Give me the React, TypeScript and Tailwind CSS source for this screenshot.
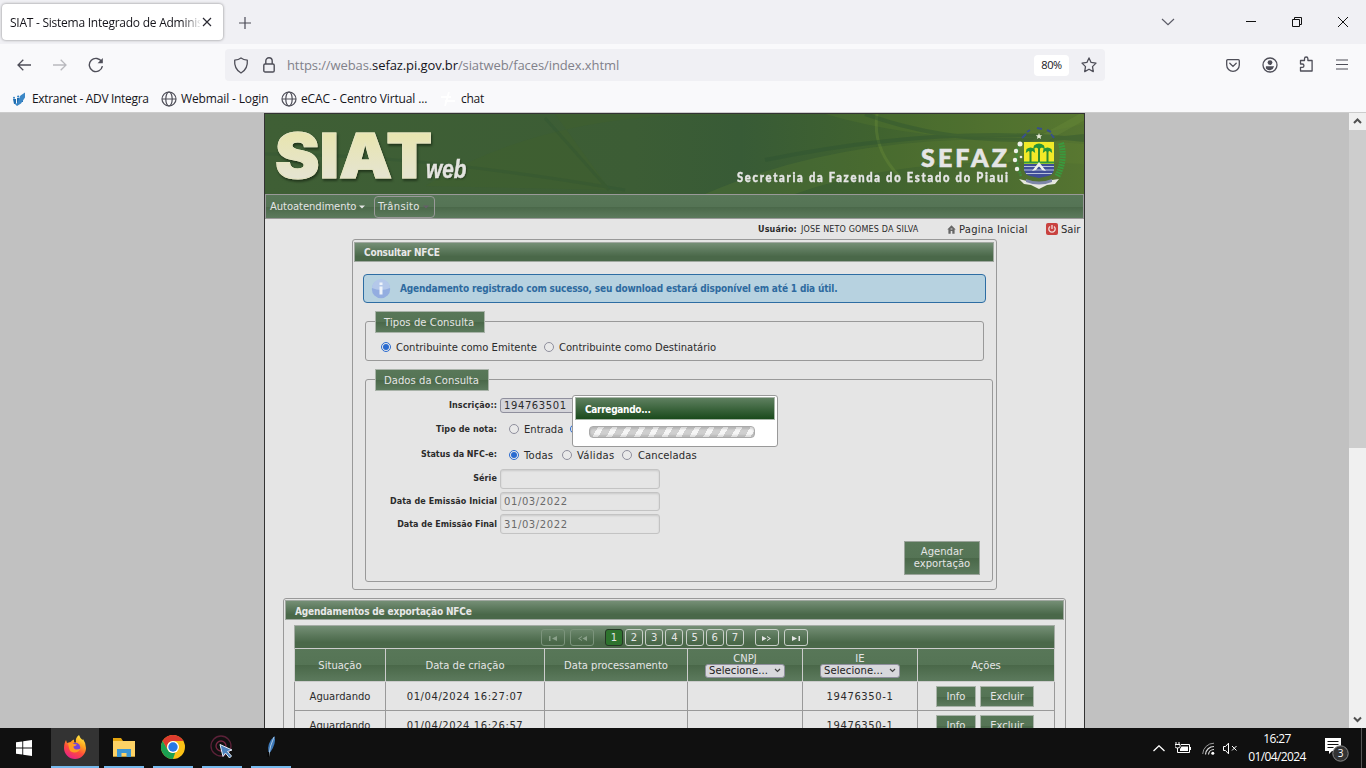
import React from "react";

const glass = "bg-[linear-gradient(to_bottom,#587758_0%,#557455_50%,#4a6849_51%,#5c7a5d_100%)]";
const barBg = "bg-[linear-gradient(to_bottom,#758f76_0%,#5a775a_45%,#4a6849_75%,#4a6849_100%)]";
const chromeFont = "font-['Open_Sans','Noto_Sans',sans-serif]";

function Globe() {
  return (
    <svg width="16" height="16" viewBox="0 0 16 16" fill="none" stroke="#4e4e58" strokeWidth="1.2">
      <circle cx="8" cy="8" r="7" />
      <ellipse cx="8" cy="8" rx="3.2" ry="7" />
      <path d="M1 8h14" strokeWidth="1" />
    </svg>
  );
}

function TabBar() {
  return (
    <div className="flex h-11 shrink-0 items-start bg-[#f0f0f4]">
      <div className="ml-[2px] mt-1 flex h-9 w-[221px] items-center rounded bg-white pl-2 shadow-[0_0_3px_rgba(0,0,0,0.45)]">
        <div className="w-[190px] overflow-hidden whitespace-nowrap pt-[2px] text-[12px] tracking-[-0.25px] text-[#15141a] [mask-image:linear-gradient(to_right,black_172px,transparent_192px)]">
          SIAT - Sistema Integrado de Adminis
        </div>
        <svg width="10" height="10" viewBox="0 0 10 10" stroke="#2b2a33" strokeWidth="1.2" className="ml-[2px]">
          <path d="M1 1l8 8M9 1l-8 8" />
        </svg>
      </div>
      <svg width="12" height="12" viewBox="0 0 12 12" stroke="#4a4a55" strokeWidth="1.2" className="ml-4 mt-[17px]">
        <path d="M6 0v12M0 6h12" />
      </svg>
      <div className="flex-1" />
      <svg width="14" height="8" viewBox="0 0 14 8" fill="none" stroke="#5b5b66" strokeWidth="1.2" className="mr-[71px] mt-[18px]">
        <path d="M1 1l6 5.6L13 1" />
      </svg>
      <svg width="10" height="12" viewBox="0 0 10 12" className="mr-9 mt-4">
        <path d="M0 5.5h10" stroke="#111" />
      </svg>
      <svg width="10" height="10" viewBox="0 0 10 10" fill="none" stroke="#111" className="mr-9 mt-[17px]">
        <path d="M.5 2.5h7v7h-7zM2.5 2.5v-2h7v7h-2" />
      </svg>
      <svg width="10" height="10" viewBox="0 0 10 10" stroke="#111" className="mr-[18px] mt-[17px]">
        <path d="M0 0l10 10M10 0L0 10" />
      </svg>
    </div>
  );
}

function NavBar() {
  return (
    <div className="flex h-[42px] shrink-0 items-center bg-[#f9f9fb]">
      <svg width="14" height="12" viewBox="0 0 14 12" fill="none" stroke="#4e4e58" strokeWidth="1.3" className="ml-[17px]">
        <path d="M14 6H1M6.3.7L1 6l5.3 5.3" />
      </svg>
      <svg width="14" height="12" viewBox="0 0 14 12" fill="none" stroke="#b9b9be" strokeWidth="1.3" className="ml-[22px]">
        <path d="M0 6h13M7.7.7L13 6l-5.3 5.3" />
      </svg>
      <svg width="16" height="16" viewBox="0 0 16 16" fill="none" stroke="#4e4e58" strokeWidth="1.4" className="ml-[21px]">
        <path d="M13.8 5A6.6 6.6 0 1 0 14.4 9.2" />
        <path d="M14.8 1v5.2H9.6z" fill="#4e4e58" stroke="none" />
      </svg>
      <div className="ml-[121px] flex h-8 w-[880px] items-center rounded bg-[#f0f0f4]">
        <svg width="16" height="17" viewBox="0 0 16 17" fill="none" stroke="#4e4e58" strokeWidth="1.3" className="ml-2">
          <path d="M8 1c2 1.5 4.2 2 6.3 2.200c.5 5.500-1.500 10-6.300 12.800C3.200 13.200 1.200 8.700 1.700 3.200 3.800 3 6 2.500 8 1z" strokeLinejoin="round" />
        </svg>
        <svg width="12" height="16" viewBox="0 0 12 16" fill="none" stroke="#4e4e58" strokeWidth="1.4" className="ml-[14px]">
          <rect x=".8" y="7" width="10.400" height="8" rx="1.300" />
          <path d="M2.800 7V4a3.200 3.200 0 0 1 6.400 0v3" />
        </svg>
        <div className="ml-3 w-[340px] whitespace-nowrap pt-px text-[13px] tracking-[-0.1px] text-[#81818a]">
          https://webas.<span className="text-[#15141a]">sefaz.pi.gov.br</span>/siatweb/faces/index.xhtml
        </div>
        <div className="flex-1" />
        <div className="flex h-[21px] w-[35px] items-center justify-center rounded bg-white text-[11px] tracking-[-0.4px] text-[#15141a]">80%</div>
        <svg width="16" height="16" viewBox="0 0 16 16" fill="none" stroke="#4e4e58" strokeWidth="1.3" strokeLinejoin="round" className="ml-3 mr-2">
          <path d="M8 .9l2.100 4.500 4.900.700-3.500 3.500.8 5L8 12.200l-4.300 2.400.8-5L1 6.100l4.900-.7z" />
        </svg>
      </div>
      <div className="flex-1" />
      <svg width="14" height="13" viewBox="0 0 14 13" fill="none" stroke="#4e4e58" strokeWidth="1.300" className="mr-[22px]">
        <path d="M1.700.7h10.600a1 1 0 0 1 1 1V6a6.300 6.300 0 0 1-12.600 0V1.700a1 1 0 0 1 1-1zM3.800 4.300L7 7.400l3.200-3.100" strokeLinecap="round" />
      </svg>
      <svg width="16" height="16" viewBox="0 0 16 16" className="mr-[21px]">
        <circle cx="8" cy="8" r="7" fill="none" stroke="#4e4e58" strokeWidth="1.300" />
        <circle cx="8" cy="5.600" r="2.400" fill="#4e4e58" />
        <path d="M3.900 9.300h8.200a4.800 4.800 0 0 1-8.200 2.300z" fill="#4e4e58" />
      </svg>
      <svg width="15" height="16" viewBox="0 0 15 16" fill="none" stroke="#4e4e58" strokeWidth="1.300" strokeLinejoin="round" className="mb-[2px] mr-[22px]">
        <path d="M1.500 4.500h4V2.700a1.700 1.700 0 0 1 3.400 0v1.800h4.200V15H1.500v-3.700h1.800a1.600 1.600 0 0 0 0-3.300H1.500z" />
      </svg>
      <svg width="12" height="11" viewBox="0 0 12 11" stroke="#4e4e58" strokeWidth="1.200" className="mb-[2px] mr-[18px]">
        <path d="M0 1h12M0 5.500h12M0 10h12" />
      </svg>
    </div>
  );
}

function Bookmarks() {
  return (
    <div className="flex h-[26px] shrink-0 items-center bg-[#f9f9fb] text-[12px] text-[#15141a]">
      <svg width="15" height="15" viewBox="0 0 15 15" className="ml-3">
        <path d="M1 7h3v5H2zM5 6h2.500v6H5zM8.500 4H11v6H8.500z" fill="#1f6db0" />
        <path d="M8.500 3.500l4.500-3v5L9 11.500 5 14l-3-3 3 .5z" fill="#3c87c6" />
        <circle cx="6.200" cy="4.500" r="1.100" fill="#2f7fc2" /><circle cx="2" cy="5.800" r="1" fill="#2f7fc2" />
      </svg>
      <span className="ml-[5px] w-[118px] whitespace-nowrap tracking-[-0.32px]">Extranet - ADV Integra</span>
      <div className="ml-[11px]"><Globe /></div>
      <span className="ml-1 w-[88px] whitespace-nowrap tracking-[-0.14px]">Webmail - Login</span>
      <div className="ml-3"><Globe /></div>
      <span className="ml-1 w-[127px] whitespace-nowrap tracking-[-0.14px]">eCAC - Centro Virtual ...</span>
      <svg width="16" height="16" viewBox="0 0 16 16" fill="none" stroke="#ffffff" strokeWidth="1.800" className="ml-3">
        <path d="M1 6h10M5 10h10M9 1L5 15" />
      </svg>
      <span className="ml-[5px] whitespace-nowrap tracking-[-0.3px]">chat</span>
    </div>
  );
}

function Crest() {
  return (
    <svg width="54" height="64" viewBox="0 0 54 64">
      <path d="M10 12l4-4M15 6l3-2M25 2l5 1M35 4l4 2M39 8l3 4" stroke="#39508a" strokeWidth="2" />
      <path d="M27 7l.9 2.200h2.300l-1.700 1.500.6 2.300-2.100-1.300-2.100 1.300.6-2.300-1.700-1.500h2.300z" fill="#e8ecd8" />
      <rect x="12" y="16" width="30" height="22" fill="#f2e928" />
      <path d="M12 38v4c0 4 2 7 6 8l9 2 9-2c4-1 6-4 6-8v-4z" fill="#3f4d97" />
      <path d="M12 40.500h30M12 44h30M14 47.500h26" stroke="#b9c2da" strokeWidth="1" />
      <path d="M12 35.500h30v2H12z" fill="#2f9a3c" />
      <path d="M27 21v15M18.500 25v11M35.500 25v11" stroke="#2f8a2e" strokeWidth="2" />
      <g fill="#24923a">
        <path d="M22 19.500q5-4 10 0l1 4-3-2-3 1.500-3-1.500-3 2z" />
        <path d="M14.500 23q4-3 8 0l.7 4-2.700-2-2 1-2-1-2.700 2z" />
        <path d="M31.500 23q4-3 8 0l.7 4-2.700-2-2 1-2-1-2.700 2z" />
      </g>
      <path d="M27 36l7 9-4-1-3-4-3 4-4 1z" fill="#eef0ea" />
      <path d="M7 19q-5 13 2 31" stroke="#3f8c3c" strokeWidth="2.500" strokeDasharray="2 1" fill="none" />
      <path d="M49 17q5 16-4 34" stroke="#3a9a3e" strokeWidth="6" strokeDasharray="1.800 .9" fill="none" />
      <g fill="#eef0ea">
        <circle cx="8" cy="18" r="2.500" /><circle cx="4" cy="25" r="2.200" /><circle cx="3" cy="34" r="2.200" />
        <circle cx="5" cy="43" r="2.200" /><circle cx="9" cy="31" r="1.300" />
      </g>
      <path d="M7 53l8 2q12 5 25-1l7-1-4 5-8 1-8 4-8-4-7-1z" fill="#e6e8df" />
      <path d="M14 53q13 5 26 0v3q-13 5-26 0z" fill="#7d86a8" />
    </svg>
  );
}

function Banner() {
  return (
    <div className="relative h-20 shrink-0 overflow-hidden bg-[linear-gradient(to_right,#3f5f35_0%,#3c5d35_45%,#385b36_58%,#40632f_75%,#557431_100%)]">
      <svg width="819" height="80" viewBox="0 0 819 80" className="absolute left-0 top-0">
        <path d="M160 72Q260 10 400 2L620 0 290 0 345 76z" fill="#456529" opacity=".25" />
        <path d="M440 80Q600 10 819 30V50Q640 40 530 80z" fill="#6b8a34" opacity=".22" />
        <path d="M560 0Q700 40 819 10V0z" fill="#64852f" opacity=".2" />
        <path d="M612 0q-5 34 22 62" stroke="#6e8e3a" strokeWidth="3" opacity=".35" fill="none" />
        <path d="M740 46L819 2" stroke="#6e8e3a" strokeWidth="8" opacity=".3" fill="none" />
        <path d="M600 0Q700 36 819 22M500 46Q680 10 819 26" stroke="#2d5231" strokeWidth="4" opacity=".4" fill="none" />
        <path d="M280 4l64 72M0 40q150 0 360 36" stroke="#2d5231" strokeWidth="3" opacity=".3" fill="none" />
      </svg>
      <div className="absolute left-[10px] top-[9px] origin-left scale-x-[1.08] whitespace-nowrap font-[Inter,sans-serif] text-[62px] font-black leading-[66px] tracking-[0px] [filter:drop-shadow(1px_2px_1px_rgba(20,35,15,0.7))]">
        <span className="bg-[linear-gradient(to_bottom,#e8e5ae_18%,#e5e4d4_85%)] bg-clip-text text-transparent [-webkit-text-stroke:1px_#e6e5c2]">SIAT</span>
      </div>
      <div className="absolute left-[161px] top-[39px] origin-left scale-x-[0.8] font-['Liberation_Sans',sans-serif] text-[26px] font-bold italic leading-[32px] text-[#e4e4e0] [-webkit-text-stroke:0.5px_#e4e4e0] [text-shadow:1px_1px_2px_#1e3018]">
        web
      </div>
      <div className="absolute left-[656px] top-[28px] font-[Lato,sans-serif] text-[25px] font-black leading-[30px] tracking-[3.1px] text-[#e5e5e5] [-webkit-text-stroke:0.6px_#e5e5e5]">SEFAZ</div>
      <div className="absolute left-[472px] top-[53px] origin-left scale-x-[0.8] whitespace-nowrap font-[Lato,sans-serif] text-[14px] font-black leading-[20px] tracking-[2.14px] text-[#e5e5e5] [-webkit-text-stroke:0.4px_#e5e5e5]">
        Secretaria da Fazenda do Estado do Piaui
      </div>
      <div className="absolute left-[747px] top-[12px]"><Crest /></div>
    </div>
  );
}

function MenuBar() {
  return (
    <div className={`flex h-[25px] shrink-0 items-center border border-[#999] text-[#e5e5e5] ${glass}`}>
      <span className="ml-1 w-[88px] whitespace-nowrap tracking-[-0.05px]">Autoatendimento</span>
      <svg width="6" height="4" viewBox="0 0 6 4" className="ml-px mr-px"><path d="M0 .5h6L3 3.500z" fill="#e5e5e5" /></svg>
      <div className="ml-2 flex h-[22px] w-[61px] items-center rounded-sm border border-[#999] pl-[3px]">
        <span className="w-[45px] tracking-[0.3px]">Trânsito</span>
        <svg width="6" height="4" viewBox="0 0 6 4"><path d="M0 .5h6L3 3.500z" fill="#665f69" /></svg>
      </div>
    </div>
  );
}

function UserRow() {
  return (
    <div className="flex h-5 shrink-0 items-center whitespace-nowrap">
      <span className="ml-[493px] w-[43px] text-[8px] font-bold tracking-[0.15px]">Usuário:</span>
      <span className="w-[146px] text-[8px] tracking-[0.16px]">JOSE NETO GOMES DA SILVA</span>
      <svg width="9" height="9" viewBox="0 0 9 9" className="mr-[3px]"><path d="M4.500.3L8.700 4.500H7.600V8.700H5.300V6H3.700V8.700H1.400V4.500H.3z" fill="#666" /><path d="M3.600 4h1.800" stroke="#ddd" /></svg>
      <span className="w-[87px] tracking-[0.22px]">Pagina Inicial</span>
      <svg width="12" height="12" viewBox="0 0 12 12">
        <rect width="12" height="12" rx="2" fill="#c9423f" />
        <path d="M4 3.500a3.200 3.200 0 1 0 4 0M6 2v4" stroke="#f1dddd" strokeWidth="1.300" fill="none" />
      </svg>
      <span className="ml-[3px]">Sair</span>
    </div>
  );
}

function Radio({ on = false }: { on?: boolean }) {
  return (
    <span className={`flex h-[10px] w-[10px] shrink-0 items-center justify-center rounded-full border bg-[#e9e9e9] ${on ? "border-[#2a6bd0]" : "border-[#8f8f9d]"}`}>
      {on && <span className="h-[6px] w-[6px] rounded-full bg-[#2a6bd0]" />}
    </span>
  );
}

function Legend({ text, className }: { text: string; className: string }) {
  return (
    <div className={`absolute -top-[11px] left-[9px] flex h-[22px] items-center border border-[#a9b3a9] pl-2 text-[#e5e5e5] ${glass} ${className}`}>{text}</div>
  );
}

function Field({ label, row, tight = false, children }: { label: string; row: string; tight?: boolean; children?: React.ReactNode }) {
  return (
    <div className={`flex items-center ${row}`}>
      <span className={`mr-[3px] w-[131px] whitespace-nowrap text-right text-[8px] font-bold ${tight ? "tracking-[0px]" : "tracking-[0.1px]"}`}>{label}</span>
      {children}
    </div>
  );
}

const inputCls = "flex w-40 items-center rounded-[3px] border border-[#c3c3c3] pl-[3px] text-[#6a6a6a] tracking-[0.6px] shadow-[inset_0_1px_2px_rgba(0,0,0,0.12)] ";

function Consultar() {
  return (
    <div className="relative ml-[87px] h-[351px] w-[645px] shrink-0 rounded-[3px] border border-[#999] px-px pt-[2px]">
      <div className={`flex h-5 w-[640px] items-center border border-[#a0a8a0] pl-[9px] font-['DejaVu_Sans_Condensed','DejaVu_Sans',sans-serif] font-bold tracking-[-0.2px] text-[#e8e8e8] ${barBg}`}>
        Consultar NFCE
      </div>
      <div className="ml-[9px] mt-3 flex h-[29px] w-[623px] items-center rounded-sm border border-[#2e6da3] bg-[#b7d2e0] font-bold text-[#2e6a9f]">
        <svg width="20" height="20" viewBox="0 0 20 20" className="ml-[7px] mr-[9px]">
          <circle cx="10" cy="10" r="9.200" fill="#93ade0" />
          <path d="M1 9a9 9 0 0 1 18 0Q10 13 1 9z" fill="#b4c8ea" />
          <rect x="8.500" y="7.500" width="3" height="8" fill="#eef3fa" />
          <rect x="8.500" y="3.500" width="3" height="2.500" fill="#eef3fa" />
        </svg>
        <span className="whitespace-nowrap font-['DejaVu_Sans_Condensed','DejaVu_Sans',sans-serif] tracking-[-0.16px]">Agendamento registrado com sucesso, seu download estará disponível em até 1 dia útil.</span>
      </div>
      <div className="relative ml-[11px] mt-[18px] flex h-10 w-[619px] items-center rounded-[3px] border border-[#999] pl-[15px] pt-3">
        <Legend text="Tipos de Consulta" className="w-[110px] tracking-[0.08px]" />
        <Radio on />
        <span className="ml-[5px] w-[148px] tracking-[-0.02px]">Contribuinte como Emitente</span>
        <Radio />
        <span className="ml-[5px]">Contribuinte como Destinatário</span>
      </div>
      <div className="relative ml-[11px] mt-[18px] flex h-[203px] w-[628px] flex-col rounded-[3px] border border-[#999] pt-[14px]">
        <Legend text="Dados da Consulta" className="w-[114px] tracking-[0.05px]" />
        <Field label="Inscrição::" row="h-[22px]">
          <div className="flex h-[15px] w-40 items-center rounded-[3px] border border-[#8f8f9d] bg-[#d5d5da] pl-[3px] tracking-[0.6px]">194763501</div>
        </Field>
        <Field label="Tipo de nota:" row="h-[26px]">
          <span className="ml-[9px] flex items-center"><Radio /><span className="ml-[5px] w-[46px]">Entrada</span><Radio on /></span>
        </Field>
        <Field label="Status da NFC-e:" tight row="h-[25px]">
          <span className="ml-[9px] flex items-center pt-px">
            <Radio on /><span className="ml-[5px] w-[38px] tracking-[0.2px]">Todas</span>
            <Radio /><span className="ml-[5px] w-[45px] tracking-[0.3px]">Válidas</span>
            <Radio /><span className="ml-[6px] tracking-[0.1px]">Canceladas</span>
          </span>
        </Field>
        <Field label="Série" row="h-[23px]"><div className={inputCls + "h-5"} /></Field>
        <Field label="Data de Emissão Inicial" row="h-[23px]"><div className={inputCls + "h-[19px]"}>01/03/2022</div></Field>
        <Field label="Data de Emissão Final" tight row="h-[22px]"><div className={inputCls + "h-5"}>31/03/2022</div></Field>
        <button className={`ml-[538px] mt-[6px] h-[34px] w-[76px] border border-[#9aa39a] text-center leading-[12px] text-[#e5e5e5] ${glass}`}>Agendar<br />exportação</button>
      </div>
      <div className="absolute left-[219px] top-[155px] h-[52px] w-[206px] rounded-[3px] border border-[#999] bg-white px-[2px] pt-px">
        <div className="flex h-[23px] items-center border border-[#a8b5a8] bg-[linear-gradient(to_bottom,#5f8060,#1a4a1c)] pl-[9px] pt-[2px] font-['DejaVu_Sans_Condensed','DejaVu_Sans',sans-serif] font-bold tracking-[-0.3px] text-white">Carregando...</div>
        <div className="ml-[14px] mt-[6px] h-3 w-[166px] rounded-sm border border-[#aaa] bg-[repeating-linear-gradient(120deg,#cfcfcf_0px,#cfcfcf_7px,#f6f6f6_7px,#f6f6f6_12px)] shadow-[inset_0_-2px_2px_rgba(0,0,0,0.1),inset_0_2px_2px_rgba(0,0,0,0.12)]" />
      </div>
    </div>
  );
}

function PageBtn({ children, className }: { children: React.ReactNode; className: string }) {
  return <span className={`flex h-[17px] items-center justify-center rounded-[3px] border ${className}`}>{children}</span>;
}

const cell = "flex items-center justify-center border-r";

function Select() {
  return (
    <div className="flex h-[14px] w-20 items-center rounded-[3px] border border-[#8f8f9d] bg-[#d8d8dc] pl-[3px] leading-none text-[#222]">
      <span className="w-[65px] text-left tracking-[0.1px]">Selecione...</span>
      <svg width="7" height="5" viewBox="0 0 7 5" fill="none" stroke="#444" strokeWidth="1.200"><path d="M1 1l2.500 2.500L6 1" /></svg>
    </div>
  );
}

function Row({ date }: { date: string }) {
  return (
    <div className="flex h-[29px] shrink-0 border-b border-l border-[#999]">
      <div className={`w-[91px] border-[#999] ${cell}`}>Aguardando</div>
      <div className={`w-[159px] border-[#999] tracking-[0.57px] ${cell}`}>{date}</div>
      <div className={`w-[143px] border-[#999] ${cell}`} />
      <div className={`w-[115px] border-[#999] ${cell}`} />
      <div className={`w-[115px] border-[#999] tracking-[0.6px] ${cell}`}>19476350-1</div>
      <div className={`w-[137px] gap-1 border-[#999] pr-[2px] text-[#e5e5e5] ${cell}`}>
        <button className={`h-[21px] w-10 border border-[#a9b3a9] ${glass}`}>Info</button>
        <button className={`h-[21px] w-[54px] border border-[#a9b3a9] ${glass}`}>Excluir</button>
      </div>
    </div>
  );
}

function Agendamentos() {
  return (
    <div className="ml-[18px] mt-2 h-[200px] w-[783px] shrink-0 rounded-[3px] border border-[#999] px-px pt-px">
      <div className={`flex h-5 w-[779px] items-center border border-[#a0a8a0] pl-[9px] pt-[3px] font-['DejaVu_Sans_Condensed','DejaVu_Sans',sans-serif] font-bold tracking-[-0.15px] text-[#e8e8e8] ${barBg}`}>
        Agendamentos de exportação NFCe
      </div>
      <div className="ml-[9px] mt-[5px] w-[761px]">
        <div className={`flex h-[24px] items-center border border-[#a5aca5] border-b-[#ccc] pl-[246px] text-[#e5e5e5] ${barBg}`}>
          <PageBtn className="mr-[5px] w-6 border-[#7c947c]"><svg width="8" height="5" viewBox="0 0 8 5" fill="#8aa08a" className="mt-[3px]"><path d="M0 0h1.500v5H0zM8 0v5L3 2.500z" /></svg></PageBtn>
          <PageBtn className="mr-[11px] w-6 border-[#7c947c]"><svg width="9" height="5" viewBox="0 0 9 5" fill="#8aa08a" className="mt-[3px]"><path d="M4 0v1L1.500 2.500 4 4v1L0 2.500zM9 0v5L4.500 2.500z" /></svg></PageBtn>
          <PageBtn className="mr-[2px] w-[18px] border-[#253625] bg-[#2e732e]">1</PageBtn>
          {["2", "3", "4", "5", "6"].map((n) => (
            <PageBtn key={n} className="mr-[2.200px] w-[18px] border-[#c8cfc8]">{n}</PageBtn>
          ))}
          <PageBtn className="mr-[11px] w-[18px] border-[#c8cfc8]">7</PageBtn>
          <PageBtn className="mr-[5px] w-6 border-[#c8cfc8]"><svg width="9" height="5" viewBox="0 0 9 5" fill="#e5e5e5" className="mt-[3px]"><path d="M0 0v5l4.500-2.500zM5 0v1l2.500 1.500L5 4v1l4-2.500z" /></svg></PageBtn>
          <PageBtn className="w-6 border-[#c8cfc8]"><svg width="8" height="5" viewBox="0 0 8 5" fill="#e5e5e5" className="mt-[3px]"><path d="M0 0v5l5-2.500zM6.500 0H8v5H6.500z" /></svg></PageBtn>
        </div>
        <div className={`flex h-[33px] border-b border-l border-[#ccc] text-center text-[#e5e5e5] ${glass}`}>
          <div className={`w-[91px] border-[#ccc] ${cell}`}>Situação</div>
          <div className={`w-[159px] border-[#ccc] ${cell}`}>Data de criação</div>
          <div className={`w-[143px] border-[#ccc] ${cell}`}>Data processamento</div>
          <div className={`w-[115px] flex-col border-[#ccc] leading-[11px] ${cell}`}>CNPJ<Select /></div>
          <div className={`w-[115px] flex-col border-[#ccc] leading-[11px] ${cell}`}>IE<Select /></div>
          <div className={`w-[137px] border-[#ccc] ${cell}`}>Ações</div>
        </div>
        <Row date="01/04/2024 16:27:07" />
        <Row date="01/04/2024 16:26:57" />
      </div>
    </div>
  );
}

function Scrollbar() {
  return (
    <div className="flex w-[17px] shrink-0 flex-col items-center bg-[#f0f0f0]">
      <svg width="17" height="17" viewBox="0 0 17 17" fill="none" stroke="#505050" strokeWidth="2"><path d="M5 10l3.500-3.500L12 10" /></svg>
      <div className="h-[318px] w-[17px] bg-[#cdcdcd]" />
      <div className="flex-1" />
      <svg width="17" height="17" viewBox="0 0 17 17" fill="none" stroke="#505050" strokeWidth="2"><path d="M5 6.500L8.500 10 12 6.500" /></svg>
    </div>
  );
}

function Task({ children, className = "w-[40px]" }: { children: React.ReactNode; className?: string }) {
  return <div className={`flex h-10 items-center justify-center border-b-2 border-[#76b9ed] ${className}`}>{children}</div>;
}

function Taskbar() {
  return (
    <div className="flex h-10 shrink-0 items-center bg-[#101010] text-white">
      <svg width="16" height="16" viewBox="0 0 16 16" fill="#fff" className="ml-4 mr-[19px]">
        <path d="M0 2.300l6.300-.9v6.100H0zM7.200 1.200L16 0v7.500H7.200zM0 8.400h6.300v6.200L0 13.700zM7.200 8.400H16V16l-8.800-1.200z" />
      </svg>
      <Task className="w-12 bg-[#333]">
        <svg width="24" height="24" viewBox="0 0 24 24">
          <defs>
            <linearGradient id="ff" x1=".8" y1="0" x2=".3" y2="1"><stop offset="0" stopColor="#fff14a" /><stop offset=".35" stopColor="#ffa51f" /><stop offset=".65" stopColor="#ff4a3c" /><stop offset="1" stopColor="#e6208c" /></linearGradient>
          </defs>
          <path d="M1 13C1 9 2 7 3 5l1 3 3.500-1Q9 5 11 4.500q-.5 2 1 3.500l1-1Q12 3 16 0q1 3 3.500 5l.5-1q3 4 3 9a11 11 0 0 1-22 0z" fill="url(#ff)" />
          <circle cx="12.500" cy="12.500" r="4.700" fill="#7543d8" />
          <path d="M5 8q4-1 6 1l3 .5q-1 1.500-3.500 2 0 2.500 3 3 2 0 4-1-2 4.500-6.500 4T6 13z" fill="#ff9b22" />
        </svg>
      </Task>
      <Task className="ml-[5px] w-10">
        <svg width="22" height="19" viewBox="0 0 22 19">
          <path d="M0 0h8l2 3h12v15.500H0z" fill="#e5a50f" />
          <path d="M0 3h22v15.500H0z" fill="#fdd265" />
          <path d="M4 19v-8h14v8h-4.500v-4h-5v4z" fill="#3c96d3" />
        </svg>
      </Task>
      <Task className="ml-[9px] w-10">
        <svg width="24" height="24" viewBox="0 0 24 24">
          <circle cx="12" cy="12" r="12" fill="#fbc116" />
          <path d="M1.600 6A12 12 0 0 1 22.400 6H12a6 6 0 0 0-5.200 9z" fill="#dd3b2e" />
          <path d="M1.600 6l5.200 9a6 6 0 0 0 7.500 2.600L12 24A12 12 0 0 1 1.600 6z" fill="#1ba052" />
          <circle cx="12" cy="12" r="6" fill="#fff" /><circle cx="12" cy="12" r="4.700" fill="#2778e5" />
        </svg>
      </Task>
      <Task className="ml-[9px] w-10">
        <svg width="24" height="24" viewBox="0 0 24 24" fill="none">
          <circle cx="11" cy="11" r="10" stroke="#5b2138" strokeWidth="1.300" /><circle cx="11" cy="11" r="5" stroke="#7a2844" strokeWidth="1.300" />
          <path d="M10 9.500l3 12 2.500-3.500 4 5 2-2-4-4.500 4.500-1.500z" fill="#4d82bd" stroke="#e5eef7" />
        </svg>
      </Task>
      <Task className="ml-[9px] w-10">
        <svg width="14" height="24" viewBox="0 0 14 24">
          <path d="M10.500 1q2 7-4 16l-2 1q-2-10 6-17z" fill="#3c78b8" />
          <path d="M10 2Q6 10 4.500 22" stroke="#c9dbea" fill="none" strokeWidth=".8" /><path d="M4.300 17v5" stroke="#050505" strokeWidth="1.500" />
        </svg>
      </Task>
      <div className="flex-1" />
      <svg width="12" height="7" viewBox="0 0 12 7" fill="none" stroke="#fff" strokeWidth="1.300" className="mr-[10px]"><path d="M.5 6L6 .8 11.500 6" /></svg>
      <svg width="16" height="12" viewBox="0 0 16 12" className="mr-[11px]">
        <path d="M1 0v3M4 0v3M0 2.500h5v2Q5 6 2.500 6 0 6 0 4.500zM2.500 6v4.500H5" stroke="#fff" fill="none" />
        <path d="M6 2.500h8.500v8H5" stroke="#fff" fill="none" /><path d="M6.500 4.500H13v4.500H5V7z" fill="#fff" /><path d="M15.500 5v3" stroke="#fff" />
      </svg>
      <svg width="13" height="13" viewBox="0 0 13 13" fill="none" stroke="#ddd" className="mr-[8px]">
        <path d="M.7 12A11.300 11.300 0 0 1 12 1.200" stroke="#999" /><path d="M3.500 12.500a8.500 8.500 0 0 1 8.500-8M6.500 12.500A5.500 5.500 0 0 1 12 7.500" strokeWidth="1.200" /><circle cx="10.800" cy="11.200" r="1.500" fill="#fff" stroke="none" />
      </svg>
      <svg width="15" height="13" viewBox="0 0 15 13" fill="none" stroke="#fff" className="mr-[10px]">
        <path d="M.5 4.500h2l3-3.300v10.600l-3-3.300h-2zM9 4l4.500 4.500M13.500 4L9 8.500" />
      </svg>
      <div className={`w-[58px] text-center text-[12px] leading-[18px] tracking-[-0.6px] ${chromeFont}`}>16:27<br />01/04/2024</div>
      <svg width="26" height="26" viewBox="0 0 26 26" className="ml-[18px] mr-[11px] mt-1">
        <path d="M1 1h16v13H8l-3 3v-3H1z" fill="#fff" /><path d="M3.500 4.500h11M3.500 7.500h11M3.500 10.500h6" stroke="#101010" />
        <circle cx="16.500" cy="16.500" r="7.700" fill="#333" stroke="#888" />
        <text x="16.500" y="20" fill="#fff" fontSize="10" textAnchor="middle" fontFamily="Open Sans, sans-serif">3</text>
      </svg>
      <div className="h-10 w-px bg-[#555]" />
      <div className="w-1" />
    </div>
  );
}

export default function App() {
  return (
    <div className={`flex h-[768px] w-[1366px] flex-col overflow-hidden ${chromeFont}`}>
      <TabBar />
      <NavBar />
      <Bookmarks />
      <div className="flex h-[616px] shrink-0 overflow-hidden border-t border-[#ccc] bg-[#c1c1c1] font-['DejaVu_Sans',sans-serif] text-[10px] leading-[13px] text-[#2b2b2b]">
        <div className="flex flex-1 justify-center">
          <div className="flex h-[640px] w-[821px] flex-col border border-[#333] bg-[#e5e5e5]">
            <Banner />
            <MenuBar />
            <UserRow />
            <Consultar />
            <Agendamentos />
          </div>
        </div>
        <Scrollbar />
      </div>
      <Taskbar />
    </div>
  );
}
